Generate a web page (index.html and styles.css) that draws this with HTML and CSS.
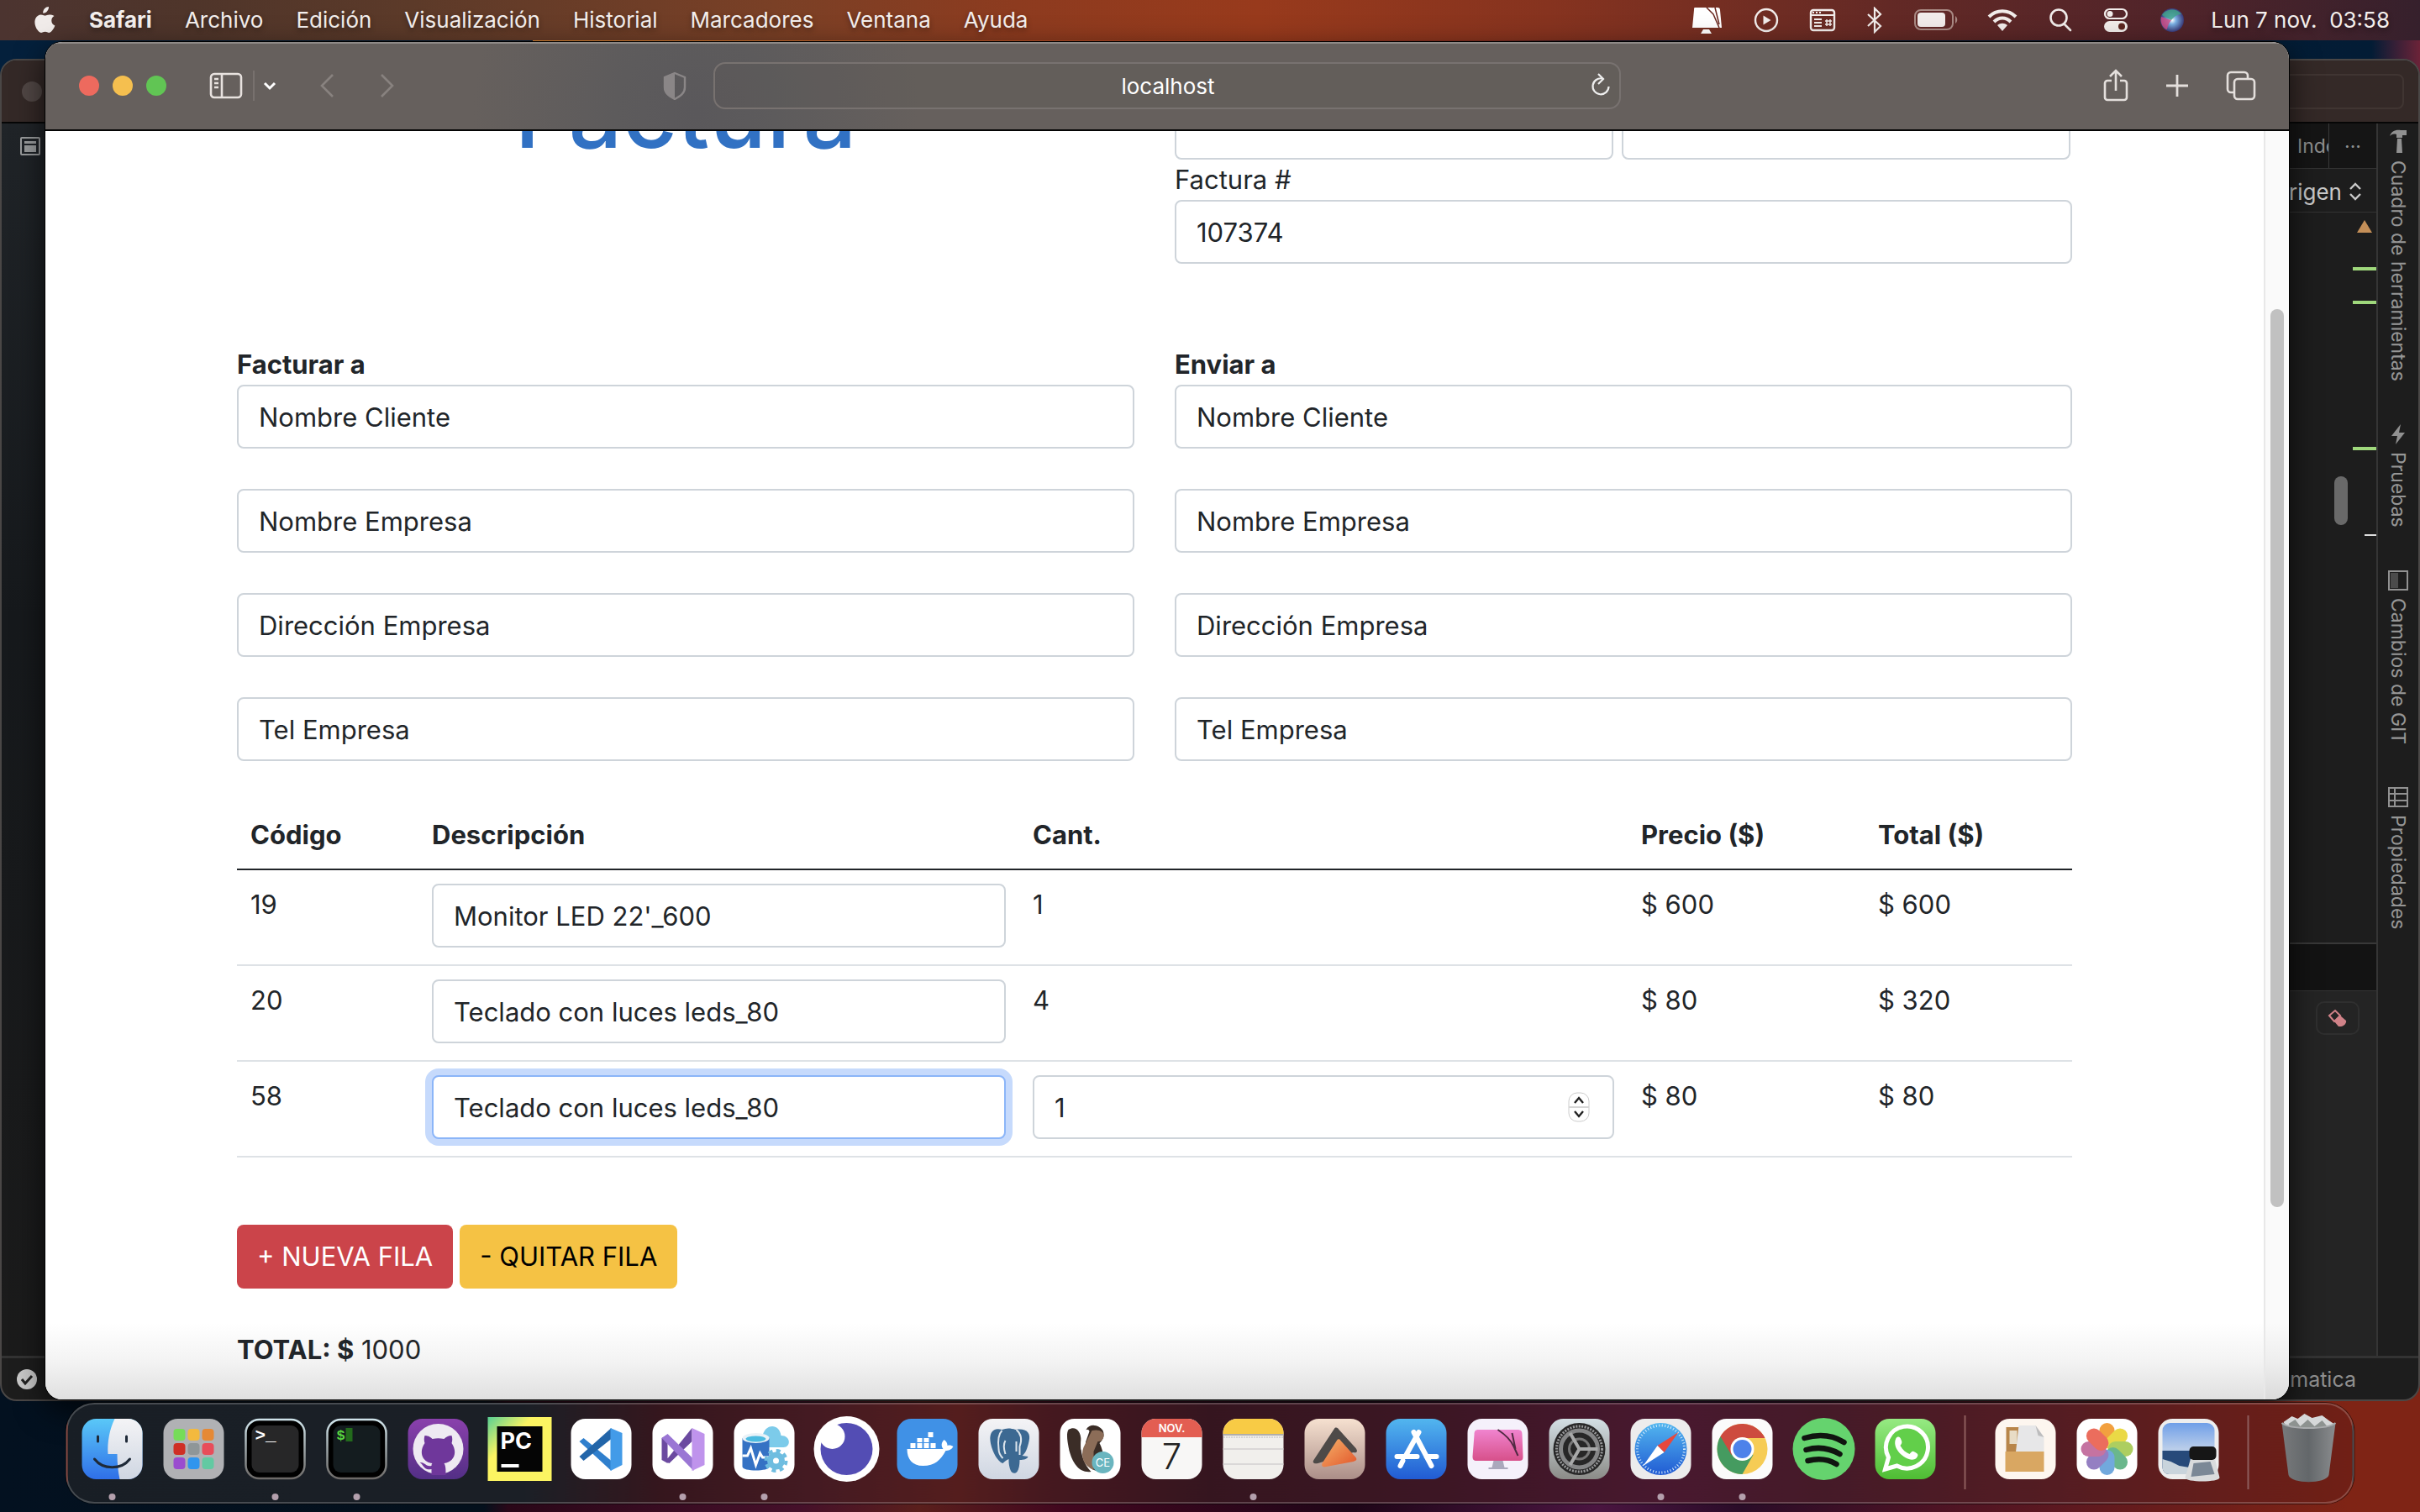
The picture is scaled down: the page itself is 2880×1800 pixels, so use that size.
FILE: index.html
```html
<!DOCTYPE html>
<html lang="es">
<head>
<meta charset="utf-8">
<title>Factura</title>
<link rel="stylesheet" href="styles.css">
</head>
<body>
<header class="menubar">
  <nav class="menus" aria-label="Menú">
    <svg class="apple" viewBox="0 0 28 34" width="28" height="34"><path fill="#f1ecea" d="M19 1c.2 2-.7 4-2 5.400-1.200 1.400-3 2.400-4.800 2.200-.2-2 .7-4 1.900-5.300C15.400 1.900 17.400 1 19 1zM25.500 12c-2 1.300-3.200 3-3.200 5.400 0 2.800 1.600 5 4.100 6-.6 1.800-1.500 3.600-2.700 5.200-1.200 1.700-2.400 3.300-4.300 3.300s-2.500-1.100-4.700-1.100c-2.300 0-3 1.100-4.800 1.200-1.900 0-3.200-1.700-4.400-3.400C2.900 25 1.200 19 3.400 14.700c1.300-2.600 3.800-4.300 6.400-4.300 1.900 0 3.400 1.200 4.800 1.200 1.300 0 3.200-1.400 5.700-1.200 1 0 3.500.2 5.200 1.600z"/></svg>
    <a class="menu app" href="#">Safari</a>
    <a class="menu" href="#">Archivo</a>
    <a class="menu" href="#">Edición</a>
    <a class="menu" href="#">Visualización</a>
    <a class="menu" href="#">Historial</a>
    <a class="menu" href="#">Marcadores</a>
    <a class="menu" href="#">Ventana</a>
    <a class="menu" href="#">Ayuda</a>
  </nav>
  <div class="status">
    <svg viewBox="0 0 40 36" width="40" height="36"><path fill="#fff" d="M6 3h19c3 0 4 1 5 4l5 20H3L5 6c0-2 0-3 1-3zM16 29h7l3 5H13z"/><path fill="#fff" d="M27 3h6c2 0 3 1 3 3l2 21h-3z"/><path d="M20 3l8 8 7 16M30 3l5 20" stroke="#6a2820" stroke-width="1.500" fill="none"/></svg>
    <svg viewBox="0 0 32 32" width="32" height="32" fill="none" stroke="#f1ecea" stroke-width="2.400"><circle cx="16" cy="16" r="13"/><path d="M12.500 10.500v11l9-5.500z" fill="#f1ecea" stroke="none"/></svg>
    <svg viewBox="0 0 32 28" width="32" height="28"><rect x="2" y="2" width="28" height="24" rx="3" fill="none" stroke="#f1ecea" stroke-width="2.400"/><path d="M4 5h2M8 5h2M12 5h2M2 8h28M6 13h9M6 17h9M6 21h9" stroke="#f1ecea" stroke-width="2"/><path d="M19 15h8M19 19h8M21 13v8M25 13v8" stroke="#f1ecea" stroke-width="1.500"/></svg>
    <svg viewBox="0 0 22 32" width="22" height="32"><path d="M3 9l15 14-7 7V2l7 7L3 23" fill="none" stroke="#f1ecea" stroke-width="2.200"/></svg>
    <svg class="battery" viewBox="0 0 54 28" width="54" height="28"><rect x="2" y="2" width="45" height="23" rx="7" fill="none" stroke="#a98a84" stroke-width="2"/><rect x="5" y="5" width="33" height="17" rx="4" fill="#f1ecea"/><path d="M50 9c3 2 3 7 0 9z" fill="#a98a84"/></svg>
    <svg viewBox="0 0 38 28" width="38" height="28" fill="none" stroke="#f1ecea" stroke-width="4"><path d="M3 10c9-9 23-9 32 0M9 16c6-6 14-6 20 0"/><path d="M19 27l-6-7c4-3 8-3 12 0z" fill="#f1ecea" stroke="none"/></svg>
    <svg viewBox="0 0 30 30" width="30" height="30" fill="none" stroke="#f1ecea" stroke-width="2.600"><circle cx="13" cy="12" r="9.500"/><path d="M19.500 19.500L27 27" stroke-linecap="round"/></svg>
    <svg viewBox="0 0 32 30" width="32" height="30"><rect x="3" y="2" width="26" height="11" rx="5.500" fill="none" stroke="#f1ecea" stroke-width="2.200"/><circle cx="9" cy="7.500" r="3.500" fill="#f1ecea"/><rect x="2" y="16" width="28" height="13" rx="6.500" fill="#f1ecea"/><circle cx="23" cy="22.500" r="4" fill="#5c2620"/></svg>
    <svg viewBox="0 0 32 32" width="32" height="32"><defs><radialGradient id="siri"><stop offset="0" stop-color="#fff"/><stop offset=".35" stop-color="#7ab0e4"/><stop offset="1" stop-color="#3a3a78"/></radialGradient></defs><circle cx="16" cy="16" r="14" fill="url(#siri)"/><path d="M4 10c4-8 18-9 23-1-7 0-9 4-12 7z" fill="#3fa387" opacity=".8"/><path d="M3 12c-2 7 3 15 7 15 1-6 3-8 5-11z" fill="#d44a84" opacity=".8"/></svg>
    <time class="clock">Lun 7 nov.&nbsp; 03:58</time>
  </div>
</header>

<main class="desktop">
  <section class="ide" aria-label="Editor">
    <div class="ide-title"><span class="ide-light"></span><span class="ide-field"></span></div>
    <div class="ide-body">
      <div class="ide-left">
        <svg viewBox="0 0 24 22" width="24" height="22"><rect x="1" y="1" width="22" height="20" rx="1" fill="none" stroke="#9a9c9d" stroke-width="2"/><path d="M5 5h14v3H5zM5 10h14v8H5z" fill="#9a9c9d"/></svg>
      </div>
      <div class="ide-main">
        <div class="ide-tabs"><span class="ide-tab">Inde</span><span class="ide-more">···</span></div>
        <div class="ide-crumb"><span>rigen</span><svg viewBox="0 0 16 24" width="16" height="24" fill="none" stroke="#c9c9c9" stroke-width="2.400"><path d="M2 9l6-6 6 6M2 15l6 6 6-6"/></svg></div>
        <div class="ide-code">
          <svg viewBox="0 0 104 390" width="104" height="390"><path d="M90 9l9 15H81z" fill="#c48f58"/><path d="M76 67h28M76 107h28M76 281h28" stroke="#9fd87c" stroke-width="4"/><path d="M90 384h14" stroke="#ddd" stroke-width="2"/><rect x="54" y="314" width="16" height="58" rx="8" fill="#696969"/></svg>
        </div>
        <div class="ide-strip"></div>
        <div class="ide-output"><button class="eraser" type="button" aria-label="Limpiar"><svg viewBox="0 0 24 22" width="24" height="22"><path d="M2 8l7-6 6 6-7 7z" fill="none" stroke="#d08288" stroke-width="2"/><path d="M8 15l7-7 7 6c1 3-3 7-6 7h-3z" fill="#d08288"/></svg></button></div>
      </div>
      <nav class="ide-side" aria-label="Paneles">
        <a class="side-tab" href="#"><svg viewBox="0 0 22 30" width="22" height="30" fill="#919191"><path d="M1 9C3 3 8 1 14 2h7v6h-5v3H9V7C5 6 3 7 1 9zM10 12h5l1 17H9z"/></svg>Cuadro de herramientas</a>
        <a class="side-tab" href="#"><svg viewBox="0 0 22 26" width="22" height="26" fill="#919191"><path d="M14 1L3 15h7L8 25l11-14h-7z"/></svg>Pruebas</a>
        <a class="side-tab" href="#"><svg viewBox="0 0 26 26" width="26" height="26"><rect x="2" y="2" width="22" height="22" fill="none" stroke="#919191" stroke-width="2"/><path d="M4 4h9v18H4z" fill="#4b4b4b"/></svg>Cambios de GIT</a>
        <a class="side-tab" href="#"><svg viewBox="0 0 26 26" width="26" height="26" fill="none" stroke="#919191" stroke-width="2"><rect x="2" y="2" width="22" height="22"/><path d="M2 9h22M2 17h22M9 2v22"/></svg>Propiedades</a>
      </nav>
    </div>
    <div class="ide-status">
      <svg viewBox="0 0 28 28" width="28" height="28"><circle cx="14" cy="14" r="12" fill="#c9c9c9"/><path d="M8 14l4 5 8-9" fill="none" stroke="#222" stroke-width="3"/></svg>
      <span class="ide-branch">omatica</span>
    </div>
  </section>

  <section class="browser" aria-label="Safari">
    <div class="toolbar">
      <div class="tools-left">
        <span class="lights"><i class="light red"></i><i class="light amber"></i><i class="light green"></i></span>
        <button class="tool" type="button" aria-label="Barra lateral"><svg viewBox="0 0 40 32" width="40" height="32" fill="none" stroke="#e8e2df" stroke-width="2.600"><rect x="2" y="2" width="36" height="28" rx="4"/><path d="M15 2v28M6 8h5M6 13h5M6 18h5"/></svg></button>
        <span class="divider"></span>
        <button class="tool chevron" type="button" aria-label="Más"><svg viewBox="0 0 16 12" width="16" height="12" fill="none" stroke="#fff" stroke-width="3"><path d="M2 3l6 6 6-6"/></svg></button>
        <button class="tool back" type="button" aria-label="Atrás"><svg viewBox="0 0 18 30" width="18" height="30" fill="none" stroke="#88827f" stroke-width="2.600"><path d="M16 2L3 15l13 13"/></svg></button>
        <button class="tool" type="button" aria-label="Adelante"><svg viewBox="0 0 18 30" width="18" height="30" fill="none" stroke="#88827f" stroke-width="2.600"><path d="M2 2l13 13L2 28"/></svg></button>
      </div>
      <button class="tool shield" type="button" aria-label="Privacidad"><svg viewBox="0 0 28 34" width="28" height="34"><path d="M14 2l12 5v12c0 7-5 10-12 14C7 29 2 26 2 19V7z" fill="none" stroke="#8a8687" stroke-width="2.400"/><path d="M14 2v31C7 29 2 26 2 19V7z" fill="#8a8687"/></svg></button>
      <label class="address"><input class="url" type="text" value="localhost" aria-label="Dirección"><svg viewBox="0 0 24 30" width="24" height="30" fill="none" stroke="#eee" stroke-width="2.200"><path d="M14 6.500A9.500 9.500 0 1 0 21.500 16M9 1l6 6-6 6"/></svg></label>
      <div class="tools-right">
        <button class="tool" type="button" aria-label="Compartir"><svg viewBox="0 0 32 40" width="32" height="40" fill="none" stroke="#e4dfdc" stroke-width="2.600"><path d="M11 14H6a3 3 0 0 0-3 3v17a3 3 0 0 0 3 3h20a3 3 0 0 0 3-3V17a3 3 0 0 0-3-3h-5M16 26V3M9 9l7-7 7 7"/></svg></button>
        <button class="tool" type="button" aria-label="Nueva pestaña"><svg viewBox="0 0 28 28" width="28" height="28" stroke="#e4dfdc" stroke-width="2.800"><path d="M14 1v26M1 14h26"/></svg></button>
        <button class="tool" type="button" aria-label="Pestañas"><svg viewBox="0 0 38 38" width="38" height="38" fill="none" stroke="#e4dfdc" stroke-width="2.600"><rect x="11" y="11" width="24" height="24" rx="4"/><path d="M11 27H7a4 4 0 0 1-4-4V7a4 4 0 0 1 4-4h16a4 4 0 0 1 4 4v4"/></svg></button>
      </div>
    </div>
    <div class="viewport">
      <form class="invoice">
        <div class="pair head">
          <h1 class="title">Factura</h1>
          <div class="numbers">
            <div class="dates">
              <input class="control date" type="text" value="07/11/2022" aria-label="Fecha">
              <input class="control date" type="text" value="07/11/2022" aria-label="Vencimiento">
            </div>
            <label class="label" for="num">Factura #</label>
            <input class="control" id="num" type="text" value="107374">
          </div>
        </div>
        <div class="pair">
          <div class="party">
            <div><label class="label strong" for="b1">Facturar a</label><input class="control" id="b1" type="text" value="Nombre Cliente"></div>
            <input class="control" type="text" value="Nombre Empresa" aria-label="Nombre Empresa">
            <input class="control" type="text" value="Dirección Empresa" aria-label="Dirección Empresa">
            <input class="control" type="text" value="Tel Empresa" aria-label="Tel Empresa">
          </div>
          <div class="party">
            <div><label class="label strong" for="s1">Enviar a</label><input class="control" id="s1" type="text" value="Nombre Cliente"></div>
            <input class="control" type="text" value="Nombre Empresa" aria-label="Nombre Empresa de envío">
            <input class="control" type="text" value="Dirección Empresa" aria-label="Dirección Empresa de envío">
            <input class="control" type="text" value="Tel Empresa" aria-label="Tel Empresa de envío">
          </div>
        </div>
        <table class="lines">
          <thead>
            <tr><th class="c-code">Código</th><th class="c-desc">Descripción</th><th class="c-qty">Cant.</th><th class="c-price">Precio ($)</th><th>Total ($)</th></tr>
          </thead>
          <tbody>
            <tr><td>19</td><td><input class="control" type="text" value="Monitor LED 22'_600" aria-label="Descripción 19"></td><td>1</td><td>$ 600</td><td>$ 600</td></tr>
            <tr><td>20</td><td><input class="control" type="text" value="Teclado con luces leds_80" aria-label="Descripción 20"></td><td>4</td><td>$ 80</td><td>$ 320</td></tr>
            <tr><td>58</td><td><input class="control focused" type="text" value="Teclado con luces leds_80" aria-label="Descripción 58"></td><td class="qty"><div class="stepper"><input class="control" type="number" value="1" aria-label="Cantidad"><svg class="spin" viewBox="0 0 26 36" width="26" height="36"><rect x="1" y="1" width="24" height="34" rx="10" fill="#fff" stroke="#ccc"/><path d="M1 18h24" stroke="#d6d6d6" stroke-width="2"/><path d="M8 13l5-6 5 6M8 23l5 6 5-6" fill="none" stroke="#222" stroke-width="2.400"/></svg></div></td><td>$ 80</td><td>$ 80</td></tr>
          </tbody>
        </table>
        <div class="actions">
          <button class="btn add" type="button">+ NUEVA FILA</button>
          <button class="btn remove" type="button">- QUITAR FILA</button>
        </div>
        <p class="total"><strong>TOTAL: $</strong> 1000</p>
      </form>
      <div class="track"><div class="thumb"></div></div>
    </div>
  </section>

  <nav class="dock" aria-label="Dock">
    <svg class="defs" width="0" height="0" aria-hidden="true"><defs>
      <linearGradient id="gBlue" x2="0" y2="1"><stop stop-color="#5ac8f8"/><stop offset="1" stop-color="#2f6fe8"/></linearGradient>
      <linearGradient id="gLight" x2="0" y2="1"><stop stop-color="#f4f4f6"/><stop offset="1" stop-color="#cfd6e2"/></linearGradient>
      <linearGradient id="gGit" x2="0" y2="1"><stop stop-color="#8a40ac"/><stop offset="1" stop-color="#532f86"/></linearGradient>
      <linearGradient id="gPy" x2="1" y2="1"><stop stop-color="#57cf94"/><stop offset=".35" stop-color="#fcf462"/><stop offset="1" stop-color="#fcf462"/></linearGradient>
      <linearGradient id="gRim" x2="0" y2="1"><stop stop-color="#cfe3ea"/><stop offset="1" stop-color="#6d6a68"/></linearGradient>
      <linearGradient id="gStore" x2="0" y2="1"><stop stop-color="#52b6ef"/><stop offset="1" stop-color="#215bd3"/></linearGradient>
      <linearGradient id="gSand" x2="0" y2="1"><stop stop-color="#f6e1d0"/><stop offset="1" stop-color="#ab8e88"/></linearGradient>
      <linearGradient id="gGreen" x2="0" y2="1"><stop stop-color="#96ea83"/><stop offset="1" stop-color="#4ebd33"/></linearGradient>
      <linearGradient id="gSet" x2="0" y2="1"><stop stop-color="#d3dfe4"/><stop offset="1" stop-color="#8b8b87"/></linearGradient>
      <linearGradient id="gPink" x2="0" y2="1"><stop stop-color="#f084cf"/><stop offset="1" stop-color="#d7508a"/></linearGradient>
      <linearGradient id="gOrange" x2="1" y2="1"><stop stop-color="#f5b26a"/><stop offset="1" stop-color="#e2562b"/></linearGradient>
      <linearGradient id="gTrash" x2="1" y2="0"><stop stop-color="#77797b"/><stop offset=".5" stop-color="#63676a"/><stop offset="1" stop-color="#8a8c8e"/></linearGradient>
      <linearGradient id="gSky" x2="0" y2="1"><stop stop-color="#6f9fe8"/><stop offset=".5" stop-color="#b9cdea"/></linearGradient>
    </defs></svg>
    <a class="dock-item running" href="#" aria-label="Finder"><svg viewBox="0 0 80 80"><rect x="4" y="4" width="72" height="72" rx="17" fill="url(#gBlue)"/><path d="M43 4h16a17 17 0 0 1 17 17v38a17 17 0 0 1-17 17H49c-2-9-3-19-3-30H35C34 32 37 16 43 4z" fill="url(#gLight)"/><path d="M23 25v6M57 25v6M19 52c10 13 32 13 42 0" fill="none" stroke="#1f2a38" stroke-width="3" stroke-linecap="round"/></svg></a>
    <a class="dock-item" href="#" aria-label="Launchpad"><svg viewBox="0 0 80 80"><rect x="4" y="4" width="72" height="72" rx="17" fill="#b0b1b4"/><g><rect x="16" y="16" width="14" height="14" rx="4" fill="#76dc58"/><rect x="33" y="16" width="14" height="14" rx="4" fill="#f3b93e"/><rect x="50" y="16" width="14" height="14" rx="4" fill="#e58935"/><rect x="16" y="33" width="14" height="14" rx="4" fill="#cf2f25"/><rect x="33" y="33" width="14" height="14" rx="4" fill="#8f9698"/><rect x="50" y="33" width="14" height="14" rx="4" fill="#e84d5a"/><rect x="16" y="50" width="14" height="14" rx="4" fill="#9a4ccf"/><rect x="33" y="50" width="14" height="14" rx="4" fill="#3095ee"/><rect x="50" y="50" width="14" height="14" rx="4" fill="#62c9a2"/></g></svg></a>
    <a class="dock-item running" href="#" aria-label="Terminal"><svg viewBox="0 0 80 80"><rect x="5" y="5" width="70" height="70" rx="16" fill="#000" stroke="url(#gRim)" stroke-width="2.500"/><rect x="12" y="12" width="56" height="56" rx="9" fill="#272728"/><text x="16" y="30" class="mono" font-size="21" fill="#fff" font-weight="700">&gt;_</text></svg></a>
    <a class="dock-item running" href="#" aria-label="iTerm"><svg viewBox="0 0 80 80"><rect x="5" y="5" width="70" height="70" rx="16" fill="#000" stroke="url(#gRim)" stroke-width="2.500"/><rect x="12" y="12" width="56" height="56" rx="9" fill="#141c1f"/><text x="16" y="29" class="mono" font-size="17" fill="#59d53f" font-weight="700">$</text><path d="M27 15h8v16h-8z" fill="#236b1c"/></svg></a>
    <a class="dock-item" href="#" aria-label="GitHub Desktop"><svg viewBox="0 0 80 80"><rect x="4" y="4" width="72" height="72" rx="17" fill="url(#gGit)"/><circle cx="40" cy="40" r="30" fill="#eeeaf2"/><path d="M24 24c4 0 7 2 9 4 5-1 9-1 14 0 2-2 5-4 9-4 1 3 1 6 0 9 8 12 2 23-9 24 2 3 2 7 2 14H32v-7c-9 2-9-5-14-8 6-1 8 6 14 4 0-1 0-2 1-3-11-1-17-12-9-24-1-3-1-6 0-9z" fill="#6f379b"/></svg></a>
    <a class="dock-item" href="#" aria-label="PyCharm"><svg viewBox="0 0 80 80"><path d="M2 2h76v76H2z" fill="url(#gPy)"/><path d="M13 13h54v54H13z" fill="#050505"/><text x="17" y="40" class="sans" font-size="27" font-weight="700" fill="#fff">PC</text><path d="M18 58h21v4H18z" fill="#fff"/></svg></a>
    <a class="dock-item" href="#" aria-label="Visual Studio Code"><svg viewBox="0 0 80 80"><rect x="4" y="4" width="72" height="72" rx="17" fill="#fff"/><path d="M14 31l5-4 33 27v12z" fill="#2f7fcd"/><path d="M14 49l5 5 33-26V15z" fill="#2265a9"/><path d="M51 15l14 6v38l-14 7z" fill="#439be8"/></svg></a>
    <a class="dock-item running" href="#" aria-label="Visual Studio"><svg viewBox="0 0 80 80"><rect x="4" y="4" width="72" height="72" rx="17" fill="#fff"/><path d="M15 27l7-4v34l-7-4zM19 55l32-40v16L24 57z" fill="#6b4aa0"/><path d="M15 27l7-5 31 30v14z" fill="#9a76d4"/><path d="M51 15l15 7v37l-15 7z" fill="#bf93ec"/></svg></a>
    <a class="dock-item running" href="#" aria-label="Azure Data Studio"><svg viewBox="0 0 80 80"><rect x="4" y="4" width="72" height="72" rx="17" fill="#fff"/><path d="M40 38c-8 0-9-10-2-12 1-16 20-18 22-2 12 0 12 14 3 14z" fill="#7ccbea"/><path d="M14 27v34c0 6 32 6 32 0V27z" fill="#3572c4"/><ellipse cx="30" cy="27" rx="16" ry="6" fill="#eaf2f8"/><ellipse cx="30" cy="28" rx="12" ry="3.500" fill="#4cbbe0"/><path d="M14 48h6l4-9 6 20 5-14 3 5h8" fill="none" stroke="#fff" stroke-width="3"/><circle cx="54" cy="54" r="7" fill="none" stroke="#6ebde0" stroke-width="7"/><circle cx="54" cy="54" r="12" fill="none" stroke="#6ebde0" stroke-width="4" stroke-dasharray="5 4.400"/></svg></a>
    <a class="dock-item" href="#" aria-label="Insomnia"><svg viewBox="0 0 80 80"><circle cx="41" cy="40" r="39" fill="#fff"/><circle cx="41" cy="40" r="31" fill="#534db4"/><circle cx="24" cy="25" r="15" fill="#fff"/></svg></a>
    <a class="dock-item" href="#" aria-label="Docker"><svg viewBox="0 0 80 80"><rect x="4" y="4" width="72" height="72" rx="17" fill="#4091e6"/><path d="M16 40h43c-3-4-2-8 1-11 3 2 4 4 4 7 3-1 5 0 7 1-2 4-6 5-9 5-6 11-13 18-27 18-13 0-19-8-19-20z" fill="#fff"/><path d="M20 33h6v6h-6zM28 33h6v6h-6zM36 33h6v6h-6zM44 33h6v6h-6zM28 27h6v5h-6zM36 27h6v5h-6zM41 20h6v6h-6z" fill="#fff"/></svg></a>
    <a class="dock-item" href="#" aria-label="PostgreSQL"><svg viewBox="0 0 80 80"><rect x="4" y="4" width="72" height="72" rx="17" fill="url(#gLight)"/><path d="M32 17c5-2 10-2 16 0 12-2 19 3 16 14-2 9-4 14-8 17l7 1c-1 3-5 4-10 4 0 6-1 11-3 14-2 3-7 2-8-2-2-6-2-9-2-13-3 1-5 3-7 5-7-2-14-17-15-27s4-16 14-13z" fill="#3c6992"/><path d="M32 18c-5 5-5 14-4 22 0 5 2 8 5 11M49 17c6 5 7 12 4 20v10M36 30c-3 5-2 10 0 16M49 31v12" fill="none" stroke="#dde5ec" stroke-width="2"/></svg></a>
    <a class="dock-item" href="#" aria-label="DBeaver"><svg viewBox="0 0 80 80"><rect x="4" y="4" width="72" height="72" rx="17" fill="#fff"/><path d="M14 17c8-5 15 1 15 13-1 16 3 27 12 37-14 2-22-10-26-25-2-10-4-20-1-25z" fill="#3b2d27"/><path d="M35 17c5-9 16-5 20 1 3 7-1 12-4 15 6 12 7 26-3 33-12-2-16-15-14-27 1-8 0-15 1-22z" fill="#3a2c25"/><path d="M33 19c2-3 5-3 6 0l-6 17-4 5c-1-8 0-16 4-22z" fill="#fff"/><path d="M42 18c8-2 15 1 14 7-1 5-4 6-7 6l-5 12v22c-12-5-16-16-12-27z" fill="#8c6d58"/><circle cx="55" cy="56" r="13" fill="#6ab5bf"/><text x="55" y="61" class="sans" font-size="13" text-anchor="middle" fill="#fff">CE</text></svg></a>
    <a class="dock-item" href="#" aria-label="Calendario"><svg viewBox="0 0 80 80"><rect x="4" y="4" width="72" height="72" rx="17" fill="#f8f7f6"/><path d="M4 26v-5A17 17 0 0 1 21 4h38a17 17 0 0 1 17 17v5z" fill="#e35e52"/><text x="40" y="20" class="sans" font-size="13" font-weight="600" text-anchor="middle" fill="#fff">NOV.</text><text x="40" y="64" class="sans" font-size="42" font-weight="300" text-anchor="middle" fill="#222">7</text></svg></a>
    <a class="dock-item running" href="#" aria-label="Notas"><svg viewBox="0 0 80 80"><rect x="4" y="4" width="72" height="72" rx="17" fill="#f1efec"/><path d="M4 22v-1A17 17 0 0 1 21 4h38a17 17 0 0 1 17 17v1z" fill="#f8cb45"/><path d="M4 23h72" stroke="#b0aeab" stroke-width="2"/><path d="M5 26h70" stroke="#bbb" stroke-width="2" stroke-dasharray="1 2"/><path d="M4 40h72M4 58h72" stroke="#d2d0cf" stroke-width="1.500"/></svg></a>
    <a class="dock-item" href="#" aria-label="Editor de diseño"><svg viewBox="0 0 80 80"><rect x="4" y="4" width="72" height="72" rx="17" fill="url(#gSand)"/><path d="M40 15c2-1 4 0 5 2l20 22c3 4 1 6-3 5L20 57c-5 1-7-1-5-4z" fill="#4e4a48"/><path d="M43 29c1-1 3-1 4 1l18 20c2 3 0 4-3 5l-32 6c-5 1-6-1-5-4z" fill="url(#gOrange)"/></svg></a>
    <a class="dock-item" href="#" aria-label="App Store"><svg viewBox="0 0 80 80"><rect x="4" y="4" width="72" height="72" rx="17" fill="url(#gStore)"/><path d="M37 20l21 40M43 20L28 47M24 54l-3 6M17 49h24M52 49h12" stroke="#fff" stroke-width="6" stroke-linecap="round"/></svg></a>
    <a class="dock-item" href="#" aria-label="CleanMyMac"><svg viewBox="0 0 80 80"><rect x="4" y="4" width="72" height="72" rx="17" fill="#f5f1fb"/><path d="M17 17h46c5 0 6 2 6 6l1 26c0 4-1 5-5 5H15c-4 0-5-2-5-5l2-26c0-4 1-6 5-6z" fill="url(#gPink)"/><path d="M35 54h11l2 8h4v2H29v-2h4z" fill="#aaa8bc"/><path d="M40 17c9 6 16 13 19 20l5 11M57 21l4 19" fill="none" stroke="#512a43" stroke-width="2"/></svg></a>
    <a class="dock-item" href="#" aria-label="Preferencias"><svg viewBox="0 0 80 80"><rect x="4" y="4" width="72" height="72" rx="17" fill="url(#gSet)"/><circle cx="40" cy="40" r="31" fill="#272727"/><circle cx="40" cy="40" r="27" fill="none" stroke="#98999a" stroke-width="3" stroke-dasharray="2 1.500"/><circle cx="40" cy="40" r="22" fill="none" stroke="#858687" stroke-width="5"/><circle cx="40" cy="40" r="12" fill="none" stroke="#777" stroke-width="3"/><path d="M40 40h22M40 40L29 21M40 40L29 59" stroke="#a8a9a9" stroke-width="4"/></svg></a>
    <a class="dock-item running" href="#" aria-label="Safari"><svg viewBox="0 0 80 80"><rect x="4" y="4" width="72" height="72" rx="17" fill="#ececec"/><circle cx="40" cy="40" r="31" fill="url(#gStore)"/><circle cx="40" cy="40" r="28" fill="none" stroke="#d8edfb" stroke-width="3" stroke-dasharray="1 2.500"/><path d="M61 20L36 36l8 8z" fill="#e8483c"/><path d="M19 60l17-24 8 8z" fill="#fff"/></svg></a>
    <a class="dock-item running" href="#" aria-label="Chrome"><svg viewBox="0 0 80 80"><rect x="4" y="4" width="72" height="72" rx="17" fill="#fbfbfb"/><circle cx="40" cy="40" r="30" fill="#f6cc55"/><path d="M40 40L14 25a30 30 0 0 0 26 45l13-23z" fill="#459b60"/><path d="M14 25a30 30 0 0 1 53 2H40L27 47z" fill="#cd4b3f"/><circle cx="40" cy="40" r="14" fill="#fff"/><circle cx="40" cy="40" r="11" fill="#4d82ea"/></svg></a>
    <a class="dock-item" href="#" aria-label="Spotify"><svg viewBox="0 0 80 80"><circle cx="40" cy="40" r="37" fill="#65d36e"/><path d="M17 27c17-5 34-3 47 5M19 41c14-4 28-2 40 5M21 54c12-3 24-2 34 4" fill="none" stroke="#101510" stroke-width="6.500" stroke-linecap="round"/></svg></a>
    <a class="dock-item" href="#" aria-label="WhatsApp"><svg viewBox="0 0 80 80"><rect x="4" y="4" width="72" height="72" rx="17" fill="url(#gGreen)"/><path d="M16 64l4-14a25 25 0 1 1 10 10z" fill="#62cf4a" stroke="#fff" stroke-width="5"/><path d="M29 27c3-3 5-1 6 2 2 4 0 5-1 7 3 5 6 8 11 10 2-2 3-4 5-3 6 3 6 4 3 8-8 7-31-10-24-24z" fill="#fff"/></svg></a>
    <span class="dock-rule"></span>
    <a class="dock-item" href="#" aria-label="The Unarchiver"><svg viewBox="0 0 80 80"><rect x="4" y="4" width="72" height="72" rx="17" fill="#fdf6ef"/><path d="M17 14h26v30H17z" fill="#b88549"/><path d="M21 18h9v16h-9z" fill="#e8dcc6"/><path d="M32 12h20l10 14v22H28z" fill="#e7e7e8"/><path d="M52 12l3 12 7 2z" fill="#bdbdbe"/><path d="M16 43h46v24H16z" fill="#d9a762"/></svg></a>
    <a class="dock-item" href="#" aria-label="Fotos"><svg viewBox="0 0 80 80"><rect x="4" y="4" width="72" height="72" rx="17" fill="#fff"/><g opacity=".95"><rect x="31" y="9" width="18" height="30" rx="9" fill="#f29b35"/><rect x="31" y="9" width="18" height="30" rx="9" fill="#e9d83d" transform="rotate(45 40 40)"/><rect x="31" y="9" width="18" height="30" rx="9" fill="#a9cc58" transform="rotate(90 40 40)"/><rect x="31" y="9" width="18" height="30" rx="9" fill="#63b486" transform="rotate(135 40 40)"/><rect x="31" y="9" width="18" height="30" rx="9" fill="#6aa5dc" transform="rotate(180 40 40)"/><rect x="31" y="9" width="18" height="30" rx="9" fill="#8f79bf" transform="rotate(225 40 40)"/><rect x="31" y="9" width="18" height="30" rx="9" fill="#c26c9c" transform="rotate(270 40 40)"/><rect x="31" y="9" width="18" height="30" rx="9" fill="#ea6655" transform="rotate(315 40 40)"/></g></svg></a>
    <a class="dock-item" href="#" aria-label="Vista Previa"><svg viewBox="0 0 80 80"><rect x="4" y="4" width="72" height="72" rx="17" fill="#eee"/><rect x="9" y="9" width="62" height="61" rx="9" fill="url(#gSky)"/><path d="M9 42h62v20a8 8 0 0 1-8 8H17a8 8 0 0 1-8-8z" fill="#274a7a"/><path d="M9 52l10 3 10 5 12 2v8H17a8 8 0 0 1-8-8z" fill="#c9d4dc"/><path d="M43 50h28l6 24c0 6-41 6-41 0z" fill="#d9dbdc"/><path d="M46 57l20-2 5 15-28 3z" fill="#7b8896"/><rect x="41" y="37" width="32" height="16" rx="5" fill="#161616"/></svg></a>
    <span class="dock-rule"></span>
    <a class="dock-item" href="#" aria-label="Papelera"><svg viewBox="0 0 80 80"><path d="M10 8l10-7 7 3 8-6 9 5 12-3 8 6 6 4-6 8H16z" fill="#d6d8d9"/><path d="M16 10l8-5 6 8 9-8 8 8 9-7 6 7-6 4H20z" fill="#8d9290"/><path d="M8 9c10 8 54 8 64 0l-8 62c-3 11-45 11-48 0z" fill="url(#gTrash)"/><path d="M8 9c10 8 54 8 64 0" fill="none" stroke="#a9abad" stroke-width="2"/></svg></a>
  </nav>
</main>
</body>
</html>
```
FILE: styles.css
```css
* { box-sizing: border-box; }

body {
  margin: 0;
  height: 100vh;
  display: flex;
  flex-direction: column;
  overflow: hidden;
  font-family: Inter, "Liberation Sans", sans-serif;
  color: #212529;
  background: #03111f;
}

a { color: inherit; text-decoration: none; }
svg { display: block; flex: none; }
button, input { font: inherit; color: inherit; }
.mono { font-family: "Liberation Mono", monospace; }
.sans { font-family: Inter, sans-serif; }

/* menu bar */
.menubar {
  height: 48px;
  flex: none;
  display: flex;
  justify-content: space-between;
  align-items: center;
  padding: 0 36px 0 39px;
  font-size: 26px;
  line-height: 46px;
  color: #f4efed;
  background: linear-gradient(90deg, #4c3430 0%, #4f352a 8%, #5c3a29 17%, #7a4026 32%, #8d3b1f 42%, #983a1c 52%, #86331f 64%, #632925 78%, #50242a 90%, #36202c 100%);
  text-shadow: 0 3px 6px rgba(0, 0, 0, .4);
}
.menus { display: flex; align-items: center; gap: 39px; }
.menu.app { font-weight: 700; }
.status { display: flex; align-items: center; gap: 35px; }
.clock { white-space: nowrap; margin-left: -5px; }
.battery { margin-right: -2px; }

/* desktop */
.desktop {
  position: relative;
  flex: 1;
  background:
    linear-gradient(90deg, transparent 22%, #e08a35 22%, #a83c20 50%, #7a2a20 62%, #1c1428 66%, transparent 70%) top / 100% 4px no-repeat,
    linear-gradient(90deg, #031120 0%, #04101c 20%, #2a0718 21%, #45102a 33%, #5a1f1c 38%, #41071f 44%, #1f0618 56%, #4a1540 66%, #2a0c28 72%, #4d1324 80%, #7f2415 97%) bottom / 100% 150px no-repeat,
    linear-gradient(90deg, #04203c 0%, #031c35 98%, #6c2338 100%);
}

/* background editor window */
.ide {
  position: absolute;
  inset: 22px 0 132px 0;
  display: flex;
  flex-direction: column;
  border: 2px solid #4a4746;
  border-radius: 20px;
  overflow: hidden;
  background: #1d1d1d;
  color: #8f8f8f;
  font-size: 24px;
}
.ide-title {
  height: 75px;
  display: flex;
  justify-content: space-between;
  align-items: center;
  padding: 0 17px 0 24px;
  background: #342927;
  border-bottom: 2px solid #060606;
}
.ide-light { width: 24px; height: 24px; border-radius: 50%; background: #514745; }
.ide-field { width: 300px; height: 42px; border: 2px solid #403532; border-radius: 8px; }
.ide-body { flex: 1; display: flex; min-height: 0; }
.ide-left { flex: 1; padding: 16px 22px; background: linear-gradient(#202428, #16191c 40%, #1b1b1b); }
.ide-main { width: 106px; display: flex; flex-direction: column; border-right: 2px solid #353535; }
.ide-tabs { height: 54px; display: flex; line-height: 54px; font-size: 23px; background: #151515; border-bottom: 1px solid #333; }
.ide-tab { width: 48px; padding-left: 10px; overflow: hidden; border-right: 1px solid #3a3a3a; }
.ide-more { flex: 1; text-align: center; }
.ide-crumb { height: 52px; display: flex; align-items: center; gap: 8px; padding-top: 3px; font-size: 26px; color: #c9c9c9; border-bottom: 1px solid #333; }
.ide-code { height: 869px; }
.ide-strip { height: 57px; background: #131313; border-top: 2px solid #383838; }
.ide-output { flex: 1; padding: 12px 0 0 32px; background: #242424; border-top: 1px solid #353535; }
.eraser { width: 52px; height: 40px; display: flex; align-items: center; justify-content: center; padding: 0; background: none; border: 2px solid #2f2f2f; border-radius: 10px; }
.ide-side { width: 48px; display: flex; flex-direction: column; align-items: center; gap: 50px; padding-top: 6px; }
.side-tab { display: flex; align-items: center; gap: 8px; writing-mode: vertical-rl; font-size: 23px; line-height: 28px; color: #969696; }
.ide-status { height: 52px; display: flex; align-items: center; justify-content: space-between; padding: 0 74px 0 16px; border-top: 3px solid #333; }
.ide-branch { font-size: 25px; }

/* browser window */
.browser {
  position: absolute;
  inset: 2px 156px 134px 54px;
  display: flex;
  flex-direction: column;
  border-radius: 20px;
  overflow: hidden;
  background: #fff;
  box-shadow: 0 0 0 1px #000, 0 12px 36px rgba(0, 0, 0, .7);
}
.toolbar {
  height: 106px;
  flex: none;
  display: grid;
  grid-template-columns: 695px 60px minmax(0, 1080px) 1fr;
  align-items: center;
  padding: 0 38px 2px 40px;
  background: radial-gradient(circle at 29% 80%, #5a585b 0, #5d5b5c 5%, #66605d 14%, #66605d 100%);
  border-top: 2px solid #8f8a87;
  border-bottom: 2px solid #050505;
}
.tool { display: flex; padding: 0; border: 0; background: none; }
.tools-left { display: flex; align-items: center; }
.lights { display: flex; gap: 16px; margin-right: 51px; }
.light { width: 24px; height: 24px; border-radius: 50%; }
.red { background: #ed6a5e; }
.amber { background: #f5bf4f; }
.green { background: #61c554; }
.divider { width: 2px; height: 36px; margin: 0 10px 0 12px; background: #78716e; }
.back { margin: 0 54px 0 51px; }
.address { height: 56px; display: flex; align-items: center; padding: 0 10px 0 12px; border: 2px solid #787270; border-radius: 14px; background: rgba(90, 86, 84, .25); }
.url { flex: 1; min-width: 0; padding: 0 0 0 24px; border: 0; background: none; color: #fff; font-size: 26px; text-align: center; }
.tools-right { display: flex; justify-content: flex-end; align-items: center; gap: 43px; }

.viewport {
  flex: 1;
  min-height: 0;
  display: flex;
  overflow: hidden;
  background: linear-gradient(#fff 94%, #f3f3f3 97%, #e0e0e0 100%);
}
.invoice { flex: 1; min-width: 0; margin-top: -56px; padding: 0 228px; font-size: 31px; line-height: 48px; }
.track { width: 30px; flex: none; padding: 212px 6px 229px; border-left: 2px solid #e8e8e8; background: rgba(0, 0, 0, .02); }
.thumb { width: 16px; height: 100%; border-radius: 8px; background: #c1c1c1; }

.pair { display: grid; grid-template-columns: 1fr 1fr; gap: 48px; }
.head { margin-bottom: 96px; }
.title { margin: 0; font-size: 113px; line-height: 70px; font-weight: 500; text-align: center; color: #3171c3; }
.dates { display: grid; grid-template-columns: 522px 1fr; gap: 10px; padding-right: 2px; }
.label { display: block; }
.strong { font-weight: 700; }
.party { display: flex; flex-direction: column; gap: 48px; }
.control {
  display: block;
  width: 100%;
  height: 76px;
  padding: 0 24px;
  border: 2px solid #ced4da;
  border-radius: 8px;
  background: #fff;
  outline: 0;
}
.date { height: 90px; padding-bottom: 8px; }
.focused { border-color: #8bb5f8; box-shadow: 0 0 0 8px #c6dafc; }

.lines { width: 100%; margin-top: 48px; border-collapse: separate; border-spacing: 0; table-layout: fixed; }
.lines th { padding: 16px; text-align: left; border-bottom: 2px solid #212529; }
.lines td { padding: 16px 16px 20px; height: 114px; vertical-align: top; border-bottom: 2px solid #dee2e6; }
.lines td:not(:has(input)) { padding-top: 17px; }
.c-code { width: 216px; }
.c-desc { width: 715px; }
.c-qty { width: 724px; }
.c-price { width: 282px; }
.stepper { position: relative; }
.stepper input { appearance: textfield; }
.spin { position: absolute; right: 29px; top: 20px; }

.actions { display: flex; gap: 8px; margin-top: 80px; }
.btn { height: 76px; padding: 0 24px; border: 0; border-radius: 8px; white-space: nowrap; }
.add { color: #fff; background: #cb444a; }
.remove { color: #000; background: #f5c244; }
.total { margin: 49px 0 0; }

/* dock */
.dock {
  position: absolute;
  bottom: 10px;
  left: 50%;
  transform: translateX(-50%);
  height: 120px;
  display: flex;
  padding: 13px 4px 0;
  border: 2px solid rgba(255, 255, 255, .2);
  border-radius: 34px;
  background: linear-gradient(90deg, #181e25 0%, #1b1f26 20%, #35161d 26%, #451a22 33%, #541d1d 39%, #45181f 43%, #35151f 50%, #3c1624 60%, #48182f 70%, #451a28 77%, #541c22 87%, #701f15 100%);
  box-shadow: 0 0 0 1px rgba(0, 0, 0, .5);
}
.defs { position: absolute; }
.dock-item { width: 97px; display: flex; flex-direction: column; align-items: center; gap: 13px; }
.dock-item svg { width: 80px; height: 80px; overflow: visible; }
.running::after { content: ""; width: 8px; height: 8px; border-radius: 50%; background: #b4a0ad; }
.dock-rule { width: 46px; height: 88px; background: linear-gradient(#8d5c5c, #8d5c5c) center / 2px 100% no-repeat; }
```
